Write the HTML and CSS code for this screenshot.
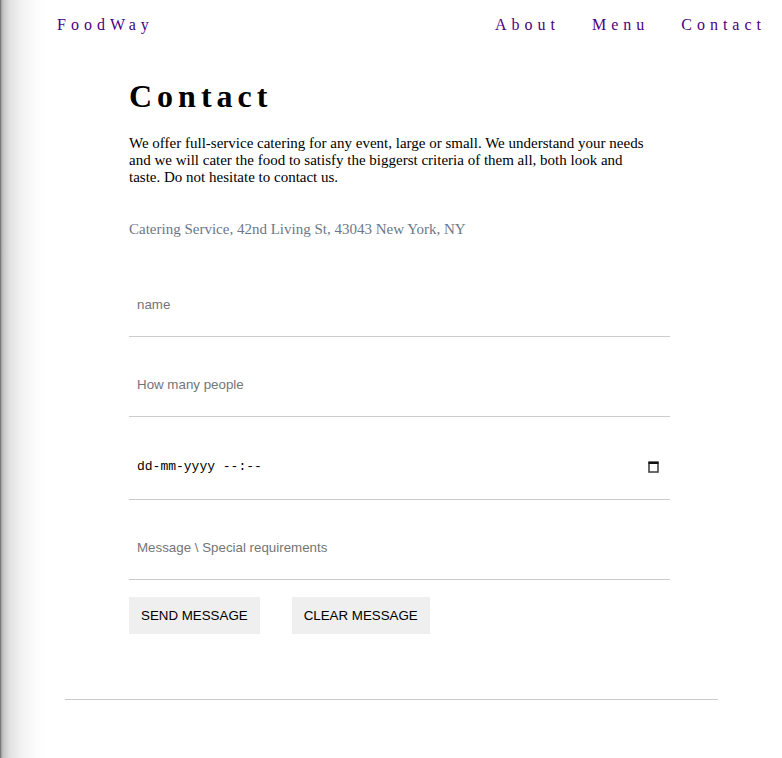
FILE: index.html
```html
<!DOCTYPE html>
<html lang="en">
<head>
<meta charset="utf-8">
<title>FoodWay - Contact</title>
<link rel="stylesheet" href="styles.css">
</head>
<body>
<header class="site-header">
  <a class="brand" href="#">FoodWay</a>
  <nav class="nav">
    <a href="#">About</a>
    <a href="#">Menu</a>
    <a href="#">Contact</a>
  </nav>
</header>
<main class="content">
  <h1 class="title">Contact</h1>
  <p class="intro">We offer full-service catering for any event, large or small. We understand your needs and we will cater the food to satisfy the biggerst criteria of them all, both look and taste. Do not hesitate to contact us.</p>
  <p class="address">Catering Service, 42nd Living St, 43043 New York, NY</p>
  <form class="form">
    <input class="field" type="text" placeholder="name">
    <input class="field" type="text" placeholder="How many people">
    <label class="field field-date">
      <input class="date-input" type="text" placeholder="dd-mm-yyyy --:--">
      <svg class="cal-icon" width="11" height="13" viewBox="0 0 11 13" aria-hidden="true">
        <rect x="1" y="2.5" width="9" height="9.5" fill="none" stroke="#444" stroke-width="1.6"/>
        <rect x="0.5" y="1.5" width="10" height="2.5" fill="#111"/>
      </svg>
    </label>
    <input class="field" type="text" placeholder="Message \ Special requirements">
    <div class="actions">
      <button class="btn" type="submit">SEND MESSAGE</button>
      <button class="btn" type="reset">CLEAR MESSAGE</button>
    </div>
  </form>
</main>
<hr class="rule">
</body>
</html>
```
FILE: styles.css
```css
html, body {
  margin: 0;
  padding: 0;
}
body {
  min-height: 758px;
  font-family: "Liberation Serif", "Times New Roman", serif;
  color: #000;
  background: linear-gradient(to right, #5a5a5a 0, #9a9a9a 1px, #c4c4c4 3px, #e2e2e2 10px, #f3f3f3 22px, #fcfcfc 36px, #ffffff 46px);
}
.site-header {
  display: flex;
  justify-content: space-between;
  align-items: center;
  padding: 16px 16px 0 57px;
  font-size: 16px;
  line-height: 18px;
}
.site-header a {
  color: #4b0082;
  text-decoration: none;
  letter-spacing: 5px;
}
.nav {
  display: flex;
  gap: 32px;
}
.content {
  margin-left: 129px;
  width: 541px;
}
.title {
  margin: 44px 0 0;
  font-size: 32px;
  line-height: 37px;
  font-weight: bold;
  letter-spacing: 5px;
}
.intro {
  margin: 20px 0 0;
  width: 520px;
  font-size: 15px;
  line-height: 17px;
}
.address {
  margin: 35px 0 0;
  font-size: 15px;
  line-height: 17px;
  color: #6b7888;
}
.form {
  display: flex;
  flex-direction: column;
  gap: 16px;
  margin-top: 35px;
}
.field {
  display: block;
  box-sizing: border-box;
  width: 100%;
  height: 64px;
  margin: 0;
  padding: 0 8px;
  border: none;
  border-bottom: 1px solid #cccccc;
  outline: none;
  background: transparent;
  font-family: Arial, "Liberation Sans", sans-serif;
  font-size: 13.333px;
  color: #000;
}
.field::placeholder {
  color: #757575;
}
.field-date {
  display: flex;
  align-items: center;
  height: 67px;
  padding: 0 11px 0 8px;
}
.date-input {
  flex: 1;
  min-width: 0;
  padding: 0;
  border: none;
  outline: none;
  background: transparent;
  font-family: "Liberation Mono", "DejaVu Sans Mono", monospace;
  font-size: 13px;
  color: #000;
}
.date-input::placeholder {
  color: #000;
}
.cal-icon {
  display: block;
  flex: none;
}
.actions {
  display: flex;
  gap: 32px;
  margin-top: 1px;
}
.btn {
  box-sizing: border-box;
  height: 37px;
  padding: 0 12px;
  border: none;
  background: #efefef;
  font-family: Arial, "Liberation Sans", sans-serif;
  font-size: 13.333px;
  line-height: 15px;
  color: #000;
}
.rule {
  width: 653px;
  margin: 65px auto 0;
  border: none;
  border-top: 1px solid #cccccc;
}
```
